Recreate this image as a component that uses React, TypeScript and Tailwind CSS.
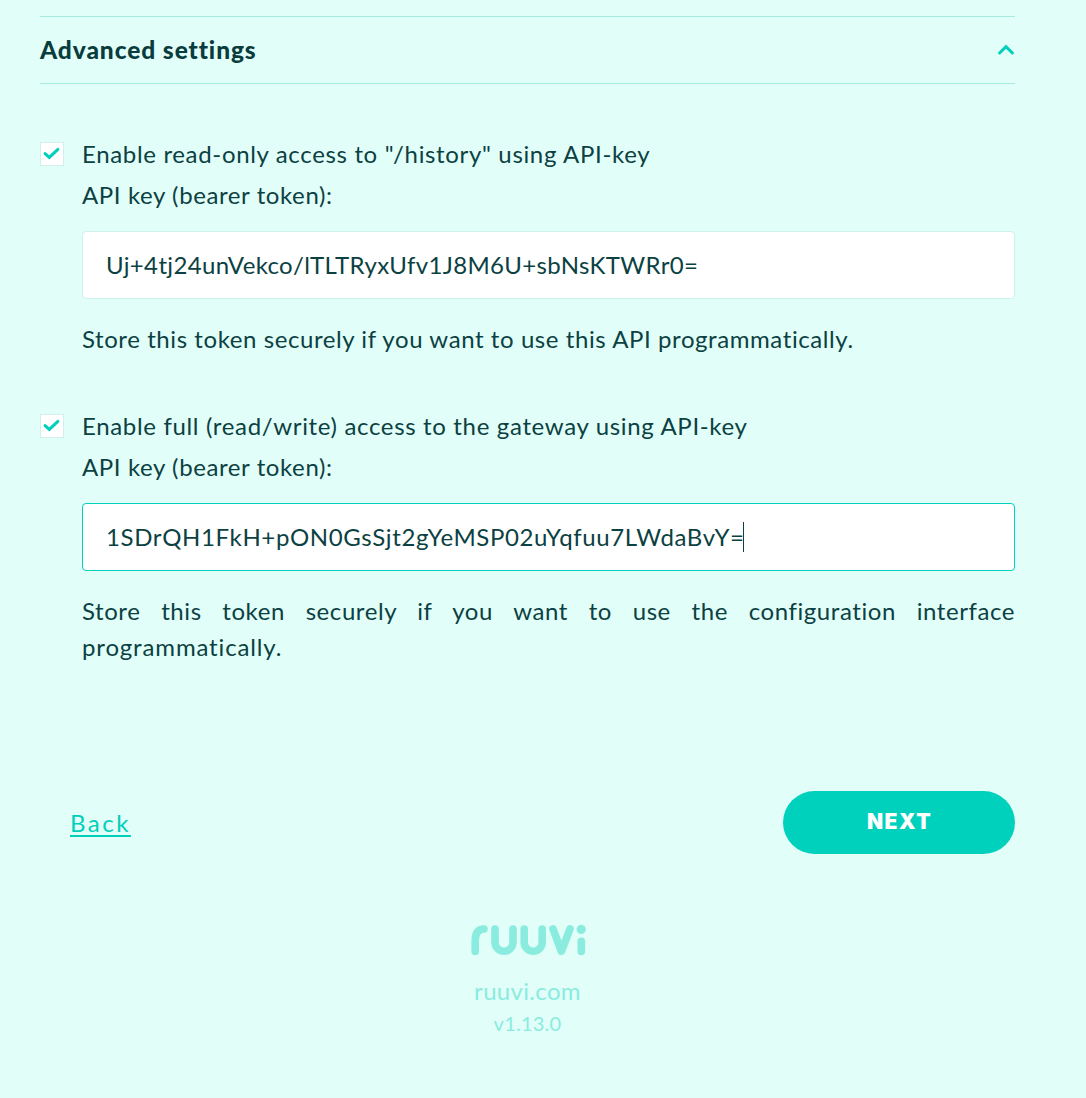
import React from "react";

function Check() {
  return (
    <span className="mt-[6px] flex size-6 shrink-0 items-center justify-center border border-[#d3efea] bg-white">
      <svg width="22" height="22" viewBox="0 0 22 22" fill="none">
        <path d="M4.1 10.6L8.3 14.4L16.9 6.4" stroke="#00cfbb" strokeWidth="3" strokeLinecap="round" strokeLinejoin="miter" />
      </svg>
    </span>
  );
}

function Logo() {
  return (
    <svg width="116" height="32" viewBox="470 924 116 32" fill="none" stroke="#89ecdf" strokeWidth="7.6" strokeLinecap="round" strokeLinejoin="round">
      <path d="M475.2 951.4V941Q475.2 929 484 929" />
      <path d="M495 929V942.3A9 9 0 0 0 513 942.3V929" />
      <path d="M524.2 929V942.3A9 9 0 0 0 542.2 942.3V929" />
      <path d="M553 928.8L561.4 951.3L570 928.8" />
      <path d="M581.3 941.3V951.4" />
      <circle cx="581.2" cy="929.4" r="4.6" fill="#89ecdf" stroke="none" />
    </svg>
  );
}

export default function App() {
  return (
    <div className="h-[1098px] bg-[#e2fef9] pl-10 pr-[71px] pt-4 font-['Lato',sans-serif] text-2xl leading-9 text-[#0b4142]">
      <header className="flex h-[68px] items-center justify-between border-y border-[#a4ebe0]">
        <h2 className="text-[24.5px] leading-9 font-black tracking-[0.91px] text-[#083c3d]">Advanced settings</h2>
        <svg width="18" height="12" viewBox="0 0 18 12" fill="none">
          <path d="M2.6 9L9 2.6L15.4 9" stroke="#00cfbb" strokeWidth="3" strokeLinecap="round" />
        </svg>
      </header>

      <section className="mt-[52px] flex gap-[18px]">
        <Check />
        <div className="flex-1">
          <p className="tracking-[0.66px]">Enable read-only access to "/history" using API-key</p>
          <p className="mt-[5px] tracking-[0.6px]">API key (bearer token):</p>
          <div className="mt-[18px] flex h-[68px] items-center rounded-[4px] border border-[#cdf1eb] bg-white px-[23px] tracking-[0.346px]">
            Uj+4tj24unVekco/lTLTRyxUfv1J8M6U+sbNsKTWRr0=
          </div>
          <p className="mt-[22px] tracking-[0.58px]">Store this token securely if you want to use this API programmatically.</p>
        </div>
      </section>

      <section className="mt-[51px] flex gap-[18px]">
        <Check />
        <div className="flex-1">
          <p className="tracking-[0.66px]">Enable full (read/write) access to the gateway using API-key</p>
          <p className="mt-[5px] tracking-[0.6px]">API key (bearer token):</p>
          <div className="mt-[18px] flex h-[68px] items-center rounded-[4px] border border-[#00cfbb] bg-white px-[23px] tracking-[0.635px]">
            1SDrQH1FkH+pON0GsSjt2gYeMSP02uYqfuu7LWdaBvY=
            <span className="-ml-[2px] h-[30px] w-px bg-[#0b4142]" />
          </div>
          <p className="mt-[22px] text-justify tracking-[0.58px]">
            Store this token securely if you want to use the configuration interface{" "}
            <span className="tracking-[0.85px]">programmatically.</span>
          </p>
        </div>
      </section>

      <div className="mt-[126px] flex items-center justify-between pl-[30px]">
        <a className="tracking-[2.5px] text-[#00cfbb] underline decoration-2 underline-offset-[3px]">Back</a>
        <button className="h-[63px] w-[232px] rounded-full bg-[#00d1bd] pb-[2px] pl-[1px] font-['Inter',sans-serif] text-[21px] leading-none font-black tracking-[1.5px] text-white">
          NEXT
        </button>
      </div>

      <footer className="mt-[70px] flex flex-col items-center text-[#89ecdf]">
        <Logo />
        <p className="mt-[17px] tracking-[0.318px]">ruuvi.com</p>
        <p className="text-[20px] leading-7 tracking-[0.24px]">v1.13.0</p>
      </footer>
    </div>
  );
}
